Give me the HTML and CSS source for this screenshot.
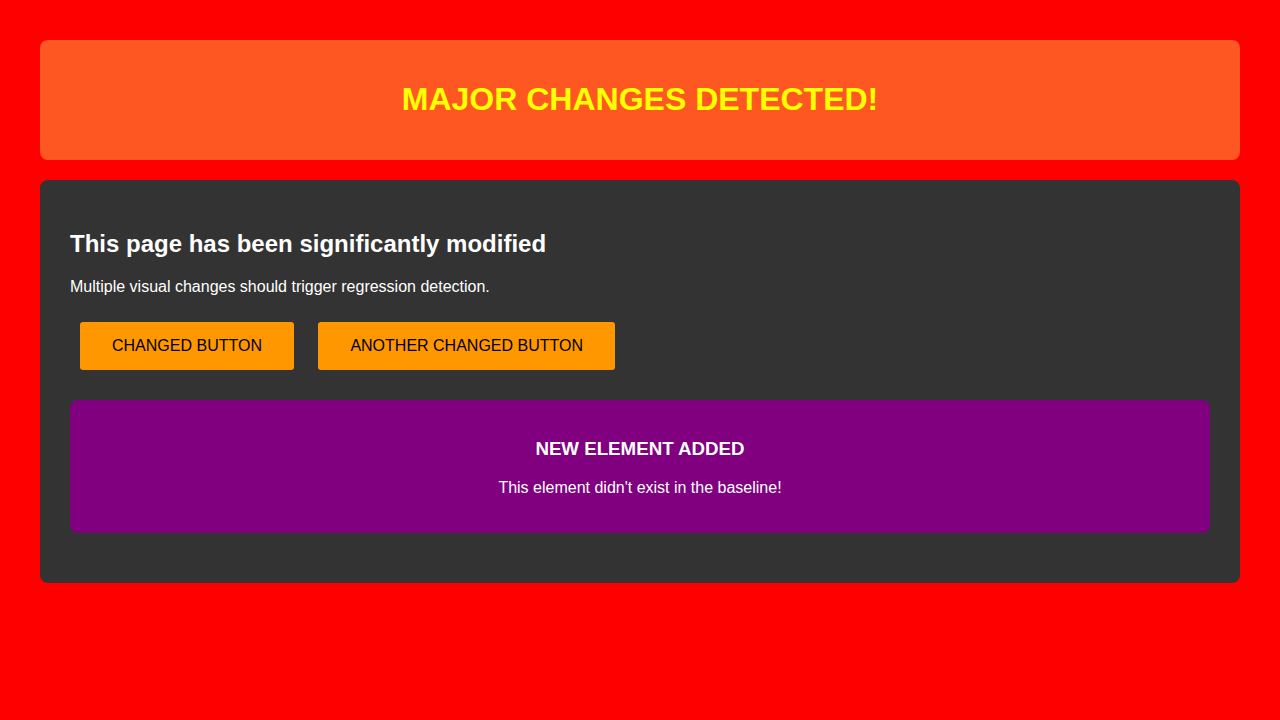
FILE: index.html
```html
<!DOCTYPE html>
<html lang="en">
<head>
<meta charset="utf-8">
<title>Major Changes</title>
<link rel="stylesheet" href="styles.css">
</head>
<body>
<header class="banner">
  <h1 class="banner-title">MAJOR CHANGES DETECTED!</h1>
</header>
<main class="card">
  <h2 class="card-title">This page has been significantly modified</h2>
  <p class="card-text">Multiple visual changes should trigger regression detection.</p>
  <div class="actions"><button class="btn">CHANGED BUTTON</button> <button class="btn">ANOTHER CHANGED BUTTON</button></div>
  <section class="new-box">
    <h3 class="new-title">NEW ELEMENT ADDED</h3>
    <p class="new-text">This element didn't exist in the baseline!</p>
  </section>
</main>
</body>
</html>
```
FILE: styles.css
```css
html, body {
  margin: 0;
  background: #ff0000;
}
body {
  padding: 40px;
  font-family: "Liberation Sans", Arial, sans-serif;
  color: #ffffff;
}
.banner {
  background: #ff5722;
  border-radius: 8px;
  padding: 20px;
  text-align: center;
}
.banner-title {
  margin: 21.44px 0;
  font-size: 32px;
  font-weight: bold;
  color: #ffff00;
}
.card {
  display: block;
  margin-top: 20px;
  background: #333333;
  border-radius: 8px;
  padding: 30px;
}
.card-title {
  margin: 19.92px 0;
  font-size: 24px;
  font-weight: bold;
}
.card-text {
  margin: 16px 0;
  font-size: 16px;
}
.actions {
  margin: 0;
}
.btn {
  display: inline-block;
  margin: 10px;
  padding: 15px 32px;
  border: none;
  border-radius: 3px;
  background: #ff9800;
  color: #000000;
  font-family: "Liberation Sans", Arial, sans-serif;
  font-size: 16px;
  line-height: 18px;
}
.new-box {
  margin: 20px 0;
  background: #800080;
  border-radius: 8px;
  padding: 20px;
  text-align: center;
}
.new-title {
  margin: 18.72px 0;
  font-size: 18.72px;
  font-weight: bold;
}
.new-text {
  margin: 16px 0;
  font-size: 16px;
}
```
